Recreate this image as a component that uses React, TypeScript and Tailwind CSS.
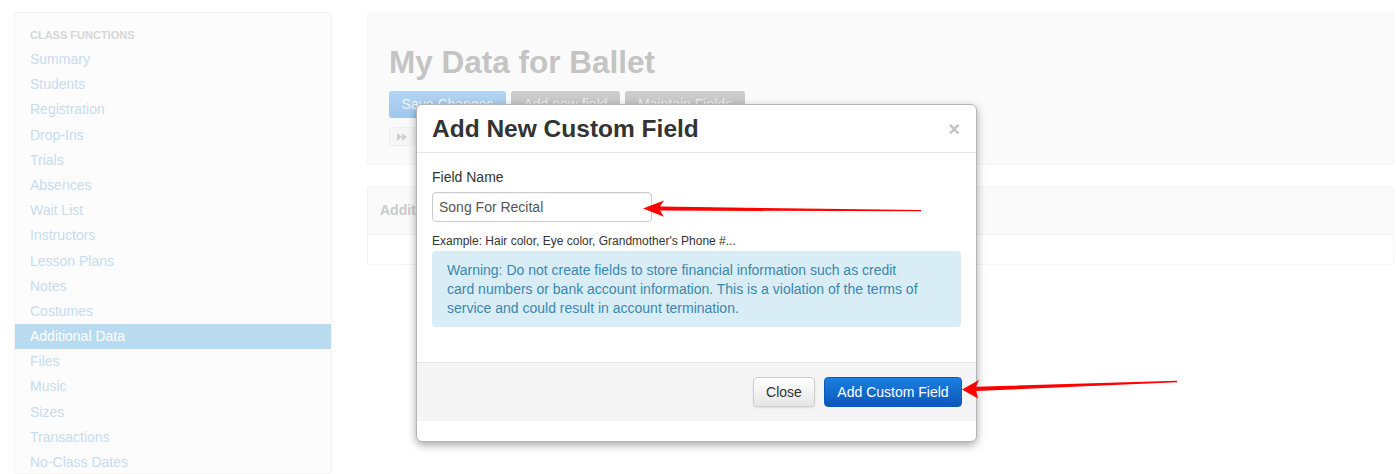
import React from 'react'

const classFunctions = [
  'Summary',
  'Students',
  'Registration',
  'Drop-Ins',
  'Trials',
  'Absences',
  'Wait List',
  'Instructors',
  'Lesson Plans',
  'Notes',
  'Costumes',
  'Additional Data',
  'Files',
  'Music',
  'Sizes',
  'Transactions',
  'No-Class Dates',
]

function Sidebar() {
  return (
    <div className="w-[318px] shrink-0 rounded-[3px] border border-[#f4f4f4] bg-[#fcfcfc]">
      <div className="mt-3 h-5 px-[15px] text-[11px] font-bold uppercase leading-5 text-[#d6d6d6]">
        Class Functions
      </div>
      <ul className="mt-[2px]">
        {classFunctions.map((name) => (
          <li
            key={name}
            className={
              name === 'Additional Data'
                ? 'h-[25.2px] bg-[#b8dbf0] px-[15px] text-[14px] leading-[25.2px] text-white'
                : 'h-[25.2px] px-[15px] text-[14px] leading-[25.2px] text-[#c7dcee]'
            }
          >
            {name}
          </li>
        ))}
      </ul>
    </div>
  )
}

function Background() {
  return (
    <div className="flex min-w-0 flex-1 flex-col">
      {/* header panel */}
      <div className="h-[153px] rounded-[3px] border border-[#f6f6f6] bg-[#fafafa] pl-[21px] pt-[31px]">
        <h1 className="h-9 text-[31.5px] font-bold leading-9 text-[#c4c4c4]">My Data for Ballet</h1>
        <div className="mt-[11px] flex gap-[5px]">
          <div className="flex h-[27px] w-[117px] items-center justify-center rounded-[3px] bg-gradient-to-b from-[#b3d4f3] to-[#a2c7ec] text-[14px] text-[#eef5fd]">
            Save Changes
          </div>
          <div className="flex h-[27px] w-[109px] items-center justify-center rounded-[3px] bg-gradient-to-b from-[#cdcdcd] to-[#c2c2c2] text-[14px] text-[#ececec]">
            Add new field
          </div>
          <div className="flex h-[27px] w-[120px] items-center justify-center rounded-[3px] bg-gradient-to-b from-[#cdcdcd] to-[#c2c2c2] text-[14px] text-[#ececec]">
            Maintain Fields
          </div>
        </div>
        <div className="mt-[9px] flex h-[19px] w-[26px] items-center justify-center rounded-[2px] border border-[#eeeeee] bg-[#f6f6f6]">
          <svg width="10" height="8" viewBox="0 0 10 8" fill="#cfcfcf">
            <polygon points="0,0 5,4 0,8" />
            <polygon points="5,0 10,4 5,8" />
          </svg>
        </div>
      </div>

      {/* data panel */}
      <div className="mt-[21px] rounded-[3px] border border-[#f3f3f3]">
        <div className="flex h-[47px] items-center bg-[#fafafa] pl-3 text-[14px] font-bold text-[#cacaca]">
          Additional Data
        </div>
        <div className="h-[30px] border-t border-[#f3f3f3] bg-white" />
      </div>
    </div>
  )
}

function Modal() {
  return (
    <div className="absolute left-[416px] top-[104px] flex h-[338px] w-[561px] flex-col rounded-[6px] border border-[#b5b5b5] bg-white shadow-[0_3px_9px_rgba(0,0,0,0.35)]">
      <div className="flex items-center justify-between border-b border-[#e5e5e5] px-[15px] pb-[10px] pt-[11px]">
        <h3 className="text-[24.5px] font-bold leading-[26px] text-[#333333]">Add New Custom Field</h3>
        <span className="mr-[1px] text-[20px] font-bold leading-[20px] text-[#c2c2c2]">×</span>
      </div>

      <div className="px-[15px] pb-[35px] pt-[14px]">
        <label className="block text-[14px] leading-5 text-[#333333]">Field Name</label>
        <div className="mt-[5px] flex h-[30px] w-[220px] items-center rounded-[4px] border border-[#cccccc] bg-white px-[6px] text-[14px] text-[#555555] shadow-[inset_0_1px_1px_rgba(0,0,0,0.05)]">
          Song For Recital
        </div>
        <p className="mt-[11px] text-[12px] leading-[17px] text-[#333333]">
          Example: Hair color, Eye color, Grandmother's Phone #...
        </p>
        <div className="mt-[1px] h-[76px] rounded-[4px] bg-[#d9edf7] px-[15px] pt-[10px] text-[14px] leading-[19px] text-[#3a87ad]">
          Warning: Do not create fields to store financial information such as credit
          <br />
          card numbers or bank account information. This is a violation of the terms of
          <br />
          service and could result in account termination.
        </div>
      </div>

      <div className="flex h-[59px] justify-end border-t border-[#e5e5e5] bg-[#f5f5f5] px-[14px] pt-[14px]">
        <button className="h-[30px] w-[62px] rounded-[4px] border border-[#cccccc] bg-gradient-to-b from-white to-[#e6e6e6] text-[14px] text-[#333333] shadow-[0_1px_2px_rgba(0,0,0,0.1)]">
          Close
        </button>
        <button className="ml-[9px] h-[30px] w-[138px] rounded-[4px] border border-[#0a5ab9] bg-gradient-to-b from-[#1d7fdf] to-[#0a58ba] text-[14px] text-white">
          Add Custom Field
        </button>
      </div>
    </div>
  )
}

function Arrows() {
  return (
    <svg className="pointer-events-none absolute left-0 top-0" width="1396" height="474" viewBox="0 0 1396 474">
      <polygon
        fill="#ff0000"
        points="643,208.5 664,200.5 660,206.6 921,209.9 921,211.3 660,210.6 664,216.8"
      />
      <polygon
        fill="#ff0000"
        points="962,389.5 979,380 976,386.8 1177,380.8 1177,382.3 976,391 978,398.5"
      />
    </svg>
  )
}

export default function App() {
  return (
    <div
      className="relative flex h-[474px] w-[1396px] gap-[35px] overflow-hidden bg-white pl-[14px] pr-[2px] pt-3"
      style={{ fontFamily: '"Liberation Sans", Arial, sans-serif' }}
    >
      <Sidebar />
      <Background />
      <Modal />
      <Arrows />
    </div>
  )
}
